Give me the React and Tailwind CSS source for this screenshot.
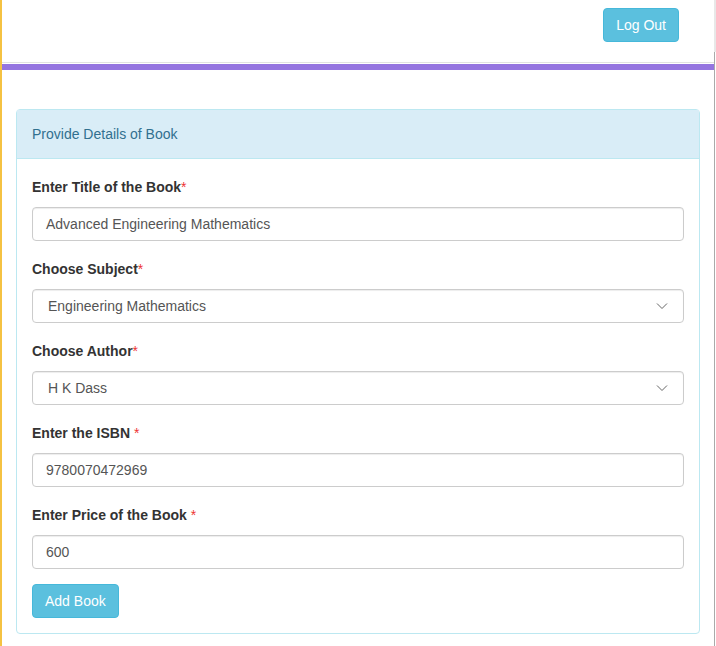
export default function App() {
  const fields = [
    { label: 'Enter Title of the Book', star: '*', value: 'Advanced Engineering Mathematics', type: 'input' },
    { label: 'Choose Subject', star: '*', value: 'Engineering Mathematics', type: 'select' },
    { label: 'Choose Author', star: '*', value: 'H K Dass', type: 'select' },
    { label: 'Enter the ISBN ', star: '*', value: '9780070472969', type: 'input' },
    { label: 'Enter Price of the Book ', star: '*', value: '600', type: 'input' },
  ]

  return (
    <div
      className="min-h-[646px] bg-white border-l-2 border-[#f5c242] flex"
      style={{ fontFamily: '"Liberation Sans", Arial, sans-serif' }}
    >
      <div className="flex-1 flex flex-col">
        {/* top bar */}
        <header className="h-[63px] border-b border-[#e2e2e2] flex items-start justify-end pt-2 pr-[35px]">
          <button
            type="button"
            className="h-[34px] px-3 bg-[#5bc0de] border border-[#46b8da] rounded text-white text-sm"
          >
            Log Out
          </button>
        </header>
        <div className="h-[6px] bg-[#9575e0] mt-px" />

        <div className="pt-[39px] pl-[14px] pr-[14px] pb-3">
          <div className="border border-[#bce8f1] rounded">
            <div className="h-[49px] bg-[#d9edf7] border-b border-[#bce8f1] flex items-center px-[15px] text-[#31708f] text-sm">
              Provide Details of Book
            </div>
            <div className="pt-[18px] px-[15px] pb-[15px]">
              {fields.map(f => (
                <div key={f.label} className="mb-[18px]">
                  <label className="block text-sm leading-5 font-bold text-[#333] mb-[10px]">
                    {f.label}<span className="font-normal text-[#e33]">{f.star}</span>
                  </label>
                  <div className="h-[34px] border border-[#ccc] rounded flex items-center justify-between text-sm text-[#555] pl-[13px] pr-[15px] shadow-[inset_0_1px_1px_rgba(0,0,0,0.075)]">
                    <span className={f.type === 'select' ? 'pl-[2px]' : ''}>{f.value}</span>
                    {f.type === 'select' && (
                      <svg width="12" height="8" viewBox="0 0 12 8" fill="none">
                        <path d="M1 1.5 L6 6.5 L11 1.5" stroke="#666" strokeWidth="1" />
                      </svg>
                    )}
                  </div>
                </div>
              ))}
              <button
                type="button"
                className="-mt-[3px] h-[34px] px-3 bg-[#5bc0de] border border-[#46b8da] rounded text-white text-sm"
              >
                Add Book
              </button>
            </div>
          </div>
        </div>
      </div>
      <div className="w-[2px] flex flex-col">
        <div className="h-[52px] bg-[#e8e8e8]" />
        <div className="flex-1 bg-[#aaa] w-px" />
      </div>
    </div>
  )
}
